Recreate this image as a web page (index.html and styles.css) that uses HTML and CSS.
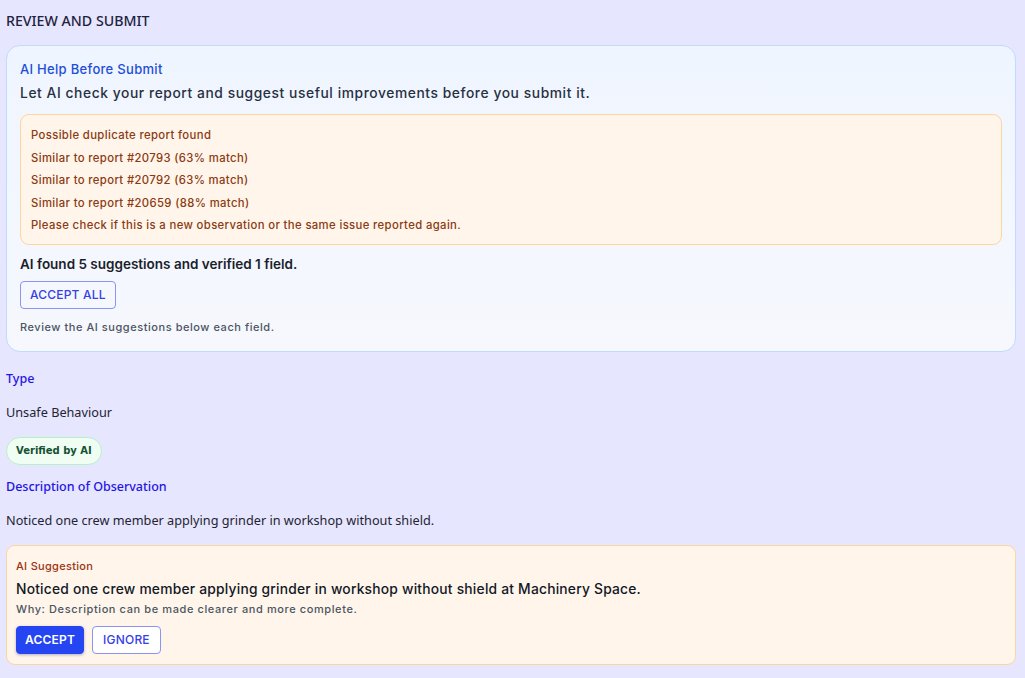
FILE: index.html
```html
<!DOCTYPE html>
<html>
<head>
<meta charset="utf-8">
<title>Review and Submit</title>
<link rel="stylesheet" href="styles.css">
</head>
<body>
  <div class="page">
    <h2 class="section-title">REVIEW AND SUBMIT</h2>

    <div class="ai-help">
      <div class="ai-help-title">AI Help Before Submit</div>
      <div class="ai-help-lead">Let AI check your report and suggest useful improvements before you submit it.</div>

      <div class="dup-box">
        <div>Possible duplicate report found</div>
        <div>Similar to report #20793 (63% match)</div>
        <div>Similar to report #20792 (63% match)</div>
        <div>Similar to report #20659 (88% match)</div>
        <div>Please check if this is a new observation or the same issue reported again.</div>
      </div>

      <div class="ai-summary">AI found 5 suggestions and verified 1 field.</div>
      <button class="btn btn-outline">ACCEPT ALL</button>
      <div class="ai-hint">Review the AI suggestions below each field.</div>
    </div>

    <div class="field">
      <div class="field-label">Type</div>
      <div class="field-value">Unsafe Behaviour</div>
      <span class="badge-verified">Verified by AI</span>
    </div>

    <div class="field">
      <div class="field-label">Description of Observation</div>
      <div class="field-value">Noticed one crew member applying grinder in workshop without shield.</div>
      <div class="suggestion">
        <div class="suggestion-label">AI Suggestion</div>
        <div class="suggestion-text">Noticed one crew member applying grinder in workshop without shield at Machinery Space.</div>
        <div class="suggestion-why">Why: Description can be made clearer and more complete.</div>
        <div class="suggestion-actions">
          <button class="btn btn-solid">ACCEPT</button>
          <button class="btn btn-outline">IGNORE</button>
        </div>
      </div>
    </div>
  </div>
</body>
</html>
```

FILE: styles.css
```css
html, body {
  margin: 0;
  padding: 0;
}
body {
  background: #e6e6fe;
  color: #1f2937;
  font-family: "Noto Sans", "Open Sans", sans-serif;
  height: 678px;
  overflow: hidden;
}
.page {
  padding: 0 9px 0 6px;
}
.section-title {
  margin: 0;
  padding-top: 11px;
  font-size: 14.2px;
  font-weight: 500;
  color: #1e2340;
  line-height: 20px;
}

/* AI help card */
.ai-help {
  margin-top: 14px;
  background: linear-gradient(180deg, #eff5ff 0%, #f6f8fd 100%);
  border: 1px solid #bfdbfe;
  border-radius: 14px;
  padding: 13px 13px 16px 13px;
  font-family: "Inter", "Noto Sans", sans-serif;
}
.ai-help-title {
  color: #1d4ed8;
  font-size: 13px;
  font-weight: 500;
  letter-spacing: 0.3px;
  line-height: 20px;
}
.ai-help-lead {
  font-size: 13.8px;
  font-weight: 500;
  letter-spacing: 0.58px;
  color: #27303f;
  line-height: 20px;
  margin-top: 4px;
}
.dup-box {
  margin-top: 11px;
  background: #fff5ea;
  border: 1px solid #fdd59e;
  border-radius: 9px;
  padding: 9px 10px 7px 10px;
  color: #8b3a12;
  font-size: 11.3px;
  font-weight: 500;
  letter-spacing: 0.37px;
}
.dup-box div {
  line-height: 22.5px;
}
.ai-summary {
  margin-top: 9px;
  font-size: 13.5px;
  font-weight: 600;
  color: #1a1f2b;
  line-height: 20px;
}
.ai-hint {
  margin-top: 10px;
  font-size: 11px;
  font-weight: 500;
  letter-spacing: 0.55px;
  color: #4b5563;
  line-height: 16px;
}

.btn {
  font-family: "Inter", "Noto Sans", sans-serif;
  font-size: 12px;
  font-weight: 500;
  letter-spacing: 0.2px;
  height: 28px;
  padding: 0 9px;
  border-radius: 4px;
  cursor: pointer;
}
.ai-help .btn {
  margin-top: 7px;
}
.btn-outline {
  background: #ffffff;
  border: 1px solid #8b93f5;
  color: #3341e6;
}
.ai-help .btn-outline {
  background: transparent;
}
.suggestion .btn-outline {
  padding: 0 10px;
}
.btn-solid {
  background: #2545f3;
  border: 1px solid #2545f3;
  color: #ffffff;
  font-weight: 600;
  padding: 0 8px;
  box-shadow: 0 1px 3px rgba(30, 40, 120, 0.35);
}

/* fields */
.field {
  margin-top: 18px;
}
.field + .field {
  margin-top: 13px;
}
.field-label {
  color: #2414e6;
  font-size: 12.5px;
  font-weight: 500;
  line-height: 18px;
}
.field-value {
  margin-top: 15px;
  font-size: 12.7px;
  color: #1f2433;
  line-height: 18px;
}
.badge-verified {
  display: inline-block;
  margin-top: 16px;
  background: #effdf3;
  border: 1px solid #b6f0c9;
  border-radius: 14px;
  padding: 0 9px;
  height: 26px;
  line-height: 26px;
  font-family: "DejaVu Sans", sans-serif;
  font-size: 10px;
  font-weight: 700;
  color: #135132;
}

/* suggestion */
.suggestion {
  margin-top: 16px;
  background: #fff5ea;
  border: 1px solid #fdd59e;
  border-radius: 9px;
  padding: 12px 9px 10px 9px;
  font-family: "Inter", "Noto Sans", sans-serif;
}
.suggestion-label {
  color: #9a3412;
  font-size: 11px;
  font-weight: 500;
  letter-spacing: 0.3px;
  line-height: 16px;
}
.suggestion-text {
  margin-top: 5px;
  font-size: 13.8px;
  font-weight: 500;
  letter-spacing: 0.22px;
  color: #111827;
  line-height: 20px;
}
.suggestion-why {
  margin-top: 2px;
  font-size: 11px;
  font-weight: 500;
  letter-spacing: 0.6px;
  color: #4b5563;
  line-height: 16px;
}
.suggestion-actions {
  margin-top: 9px;
  display: flex;
  gap: 8px;
}
```
